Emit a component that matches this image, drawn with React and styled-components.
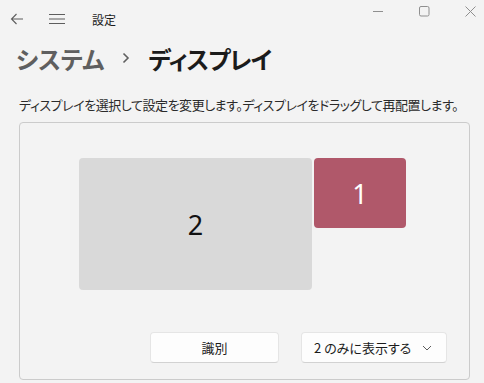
import React from "react";
import styled, { createGlobalStyle } from "styled-components";

const Global = createGlobalStyle`
  html, body { margin: 0; padding: 0; background: #f3f3f3; }
  body {
    width: 484px; height: 383px; overflow: hidden;
    font-family: "Noto Sans CJK JP", "Noto Sans", sans-serif;
    font-feature-settings: "palt";
    color: #1b1b1b;
  }
`;

const Window = styled.div`
  width: 484px;
  height: 383px;
  display: flex;
  flex-direction: column;
  background: #f3f3f3;
  overflow: hidden;
`;

const TitleBar = styled.div`
  height: 38px;
  display: flex;
  align-items: center;
`;

const IconButton = styled.div`
  width: ${(p) => p.$w || 40}px;
  height: 38px;
  display: flex;
  align-items: center;
  justify-content: center;
  color: #5d5d5d;
`;

const AppTitle = styled.span`
  font-size: 12px;
  color: #1b1b1b;
  margin-left: 12px;
`;

const Spacer = styled.div`flex: 1;`;

const CaptionGroup = styled.div`
  display: flex;
  align-self: flex-start;
  margin-right: -9px;
`;

const CaptionButton = styled.div`
  width: 46px;
  height: 23px;
  display: flex;
  align-items: center;
  justify-content: center;
  color: #8f8f8f;
`;

const Breadcrumb = styled.h1`
  margin: 0;
  padding: 0 0 0 16px;
  height: 40px;
  display: flex;
  align-items: center;
  font-size: 24px;
  font-weight: 600;
`;

const Crumb = styled.span`
  color: ${(p) => (p.$current ? "#1b1b1b" : "#5f5f5f")};
  font-weight: ${(p) => (p.$current ? 700 : 600)};
  letter-spacing: ${(p) => (p.$current ? "-1px" : "0")};
`;

const Sep = styled.span`
  display: flex;
  align-items: center;
  width: 44px;
  justify-content: center;
  color: #5f5f5f;
`;

const Description = styled.p`
  margin: 18px 0 0 19px;
  font-size: 13px;
  line-height: 18px;
  letter-spacing: -0.45px;
  color: #2b2b2b;
`;

const Panel = styled.div`
  margin: 8px 0 0 19px;
  width: 449px;
  height: 256px;
  border: 1px solid #cbcbcb;
  border-radius: 4px;
  display: flex;
  flex-direction: column;
  background: #f3f3f3;
`;

const Canvas = styled.div`
  position: relative;
  height: 209px;
`;

const Monitor = styled.div`
  position: absolute;
  border-radius: 4px;
  display: flex;
  align-items: center;
  justify-content: center;
  font-family: "Noto Sans", "Open Sans", sans-serif;
  font-size: 27px;
  background: ${(p) => (p.$active ? "#b0586a" : "#d9d9d9")};
  color: ${(p) => (p.$active ? "#ffffff" : "#111111")};
`;

const ButtonRow = styled.div`
  display: flex;
  justify-content: flex-end;
  gap: 22px;
  padding-right: 22px;
`;

const Button = styled.div`
  width: ${(p) => p.$w}px;
  height: 31px;
  box-sizing: border-box;
  background: #fdfdfd;
  border: 1px solid #e5e5e5;
  border-bottom-color: #d2d2d2;
  border-radius: 4px;
  display: flex;
  align-items: center;
  justify-content: ${(p) => (p.$between ? "space-between" : "center")};
  padding: ${(p) => (p.$between ? "0 14px 0 12px" : "0")};
  font-size: 13px;
  color: #1b1b1b;
`;

const Chevron = () => (
  <svg width="10" height="6" viewBox="0 0 10 6">
    <path d="M1 1l4 4 4-4" fill="none" stroke="#5d5d5d" strokeWidth="1" />
  </svg>
);

export default function App() {
  return (
    <Window>
      <Global />
      <TitleBar>
        <IconButton $w={34}>
          <svg width="14" height="12" viewBox="0 0 14 12">
            <path d="M13 6H1.5M6.5 1L1.5 6l5 5" fill="none" stroke="#5d5d5d" strokeWidth="1.1" />
          </svg>
        </IconButton>
        <IconButton $w={46}>
          <svg width="16" height="12" viewBox="0 0 16 12">
            <path d="M0 1.5h16M0 6h16M0 10.5h16" stroke="#5d5d5d" strokeWidth="1.1" />
          </svg>
        </IconButton>
        <AppTitle>設定</AppTitle>
        <Spacer />
        <CaptionGroup>
          <CaptionButton>
            <svg width="10" height="10" viewBox="0 0 10 10">
              <path d="M0 4.5h10" stroke="#8f8f8f" strokeWidth="1" />
            </svg>
          </CaptionButton>
          <CaptionButton>
            <svg width="11" height="11" viewBox="0 0 11 11">
              <rect x="0.5" y="0.5" width="9.5" height="9.5" rx="1.5" fill="none" stroke="#8f8f8f" strokeWidth="1" />
            </svg>
          </CaptionButton>
          <CaptionButton>
            <svg width="11" height="11" viewBox="0 0 11 11">
              <path d="M0.5 0.5l10 10M10.5 0.5l-10 10" stroke="#8f8f8f" strokeWidth="1" />
            </svg>
          </CaptionButton>
        </CaptionGroup>
      </TitleBar>
      <Breadcrumb>
        <Crumb>システム</Crumb>
        <Sep>
          <svg width="8" height="12" viewBox="0 0 8 12">
            <path d="M1.5 1.5l4.5 4.5-4.5 4.5" fill="none" stroke="#5f5f5f" strokeWidth="1.6" />
          </svg>
        </Sep>
        <Crumb $current>ディスプレイ</Crumb>
      </Breadcrumb>
      <Description>
        ディスプレイを選択して設定を変更します。ディスプレイをドラッグして再配置します。
      </Description>
      <Panel>
        <Canvas>
          <Monitor style={{ left: 59, top: 35, width: 233, height: 132 }}>2</Monitor>
          <Monitor $active style={{ left: 294, top: 35, width: 92, height: 70 }}>1</Monitor>
        </Canvas>
        <ButtonRow>
          <Button $w={129}>識別</Button>
          <Button $w={146} $between>
            <span>2 のみに表示する</span>
            <Chevron />
          </Button>
        </ButtonRow>
      </Panel>
    </Window>
  );
}
